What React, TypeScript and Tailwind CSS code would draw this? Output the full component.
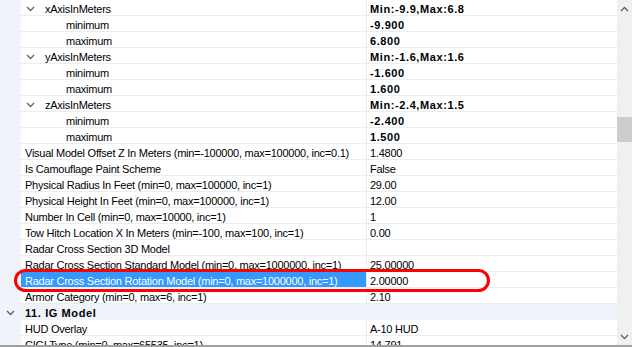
type Prop = {
  name: string;
  value?: string;
  indent?: 'top' | 'expander' | 'leaf';
  bold?: boolean;
  selected?: boolean;
  category?: boolean;
};

const rows: Prop[] = [
  { name: 'xAxisInMeters', value: 'Min:-9.9,Max:6.8', indent: 'expander', bold: true },
  { name: 'minimum', value: '-9.900', indent: 'leaf', bold: true },
  { name: 'maximum', value: '6.800', indent: 'leaf', bold: true },
  { name: 'yAxisInMeters', value: 'Min:-1.6,Max:1.6', indent: 'expander', bold: true },
  { name: 'minimum', value: '-1.600', indent: 'leaf', bold: true },
  { name: 'maximum', value: '1.600', indent: 'leaf', bold: true },
  { name: 'zAxisInMeters', value: 'Min:-2.4,Max:1.5', indent: 'expander', bold: true },
  { name: 'minimum', value: '-2.400', indent: 'leaf', bold: true },
  { name: 'maximum', value: '1.500', indent: 'leaf', bold: true },
  { name: 'Visual Model Offset Z In Meters (min=-100000, max=100000, inc=0.1)', value: '1.4800' },
  { name: 'Is Camouflage Paint Scheme', value: 'False' },
  { name: 'Physical Radius In Feet (min=0, max=100000, inc=1)', value: '29.00' },
  { name: 'Physical Height In Feet (min=0, max=100000, inc=1)', value: '12.00' },
  { name: 'Number In Cell (min=0, max=10000, inc=1)', value: '1' },
  { name: 'Tow Hitch Location X In Meters (min=-100, max=100, inc=1)', value: '0.00' },
  { name: 'Radar Cross Section 3D Model', value: '' },
  { name: 'Radar Cross Section Standard Model (min=0, max=1000000, inc=1)', value: '25.00000' },
  { name: 'Radar Cross Section Rotation Model (min=0, max=1000000, inc=1)', value: '2.00000', selected: true },
  { name: 'Armor Category (min=0, max=6, inc=1)', value: '2.10' },
  { name: '11. IG Model', category: true },
  { name: 'HUD Overlay', value: 'A-10 HUD' },
  { name: 'CIGI Type (min=0, max=65535, inc=1)', value: '14,791' },
];

function Chevron({ up = false }: { up?: boolean }) {
  return (
    <svg width="9" height="6" viewBox="0 0 9 6" className="text-[#5f5f5f]">
      <path
        d={up ? 'M1 5l3.5-3.5L8 5' : 'M1 1l3.5 3.5L8 1'}
        fill="none"
        stroke="currentColor"
        strokeWidth={1.3}
      />
    </svg>
  );
}

function Row({ p }: { p: Prop }) {
  if (p.category) {
    return (
      <div className="flex h-[16px] shrink-0 bg-[#f0f3fa]">
        <div className="flex w-[21px] shrink-0 items-center justify-center pr-[1px] pt-[1px]">
          <Chevron />
        </div>
        <span className="pl-[4px] pt-[1px] font-bold leading-[16px] tracking-[0.6px]">{p.name}</span>
      </div>
    );
  }

  const pad =
    p.indent === 'expander' ? 'pl-[24px]' : p.indent === 'leaf' ? 'pl-[45px]' : 'pl-[4px]';

  return (
    <div className="flex h-[16px] shrink-0">
      <div className="w-[21px] shrink-0 bg-[#f0f3fa]" />
      <div className="relative w-[346px] shrink-0 border-b border-r border-[#e9edf6]">
        {p.indent === 'expander' && (
          <div className="absolute left-[5px] top-[6px] flex">
            <Chevron />
          </div>
        )}
        <div
          className={
            'h-full whitespace-nowrap pt-[1px] leading-[16px] ' +
            pad +
            (p.selected ? ' bg-[#3399ff] text-white' : ' text-black')
          }
        >
          {p.name}
        </div>
      </div>
      <div
        className={
          'flex-1 whitespace-nowrap border-b border-[#e9edf6] pl-[3px] pt-[1px] leading-[16px] text-black ' +
          (p.bold ? 'font-bold tracking-[0.6px]' : '')
        }
      >
        {p.value}
      </div>
    </div>
  );
}

export default function App() {
  return (
    <div
      className="relative flex h-[347px] w-[632px] flex-col overflow-hidden bg-white text-[11px] tracking-[-0.25px]"
      style={{ fontFamily: '"Liberation Sans", Arial, sans-serif' }}
    >
      <div className="flex h-[345px] overflow-hidden">
        {/* Property rows */}
        <div className="flex flex-1 flex-col overflow-hidden">
          {rows.map((p, i) => (
            <Row key={i} p={p} />
          ))}
        </div>

        {/* Scrollbar */}
        <div className="flex w-[15px] shrink-0 flex-col bg-[#f0f0f0]">
          <div className="flex h-[17px] items-center justify-center">
            <Chevron up />
          </div>
          <div className="flex-1 pt-[100px]">
            <div className="h-[25px] bg-[#cdcdcd]" />
          </div>
          <div className="flex h-[17px] items-center justify-center">
            <Chevron />
          </div>
        </div>
      </div>
      <div className="h-[2px] bg-[#a0a0a0]" />

      {/* Red annotation around selected row */}
      <div className="absolute left-[14px] top-[269px] h-[23px] w-[476px] rounded-full border-[3px] border-[#ff0000]" />
    </div>
  );
}
